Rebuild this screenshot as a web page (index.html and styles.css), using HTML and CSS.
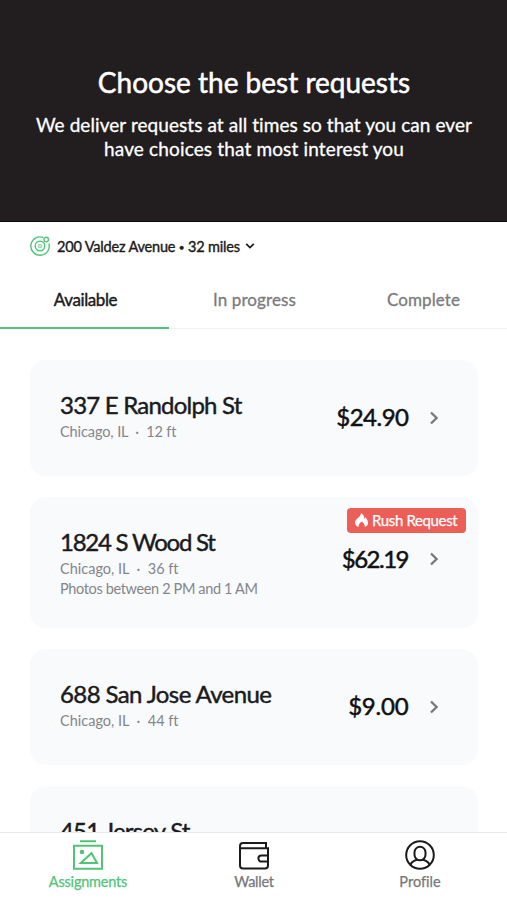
FILE: index.html
```html
<!DOCTYPE html>
<html lang="en">
<head>
<meta charset="utf-8">
<meta name="viewport" content="width=device-width, initial-scale=1">
<title>Assignments</title>
<link rel="stylesheet" href="styles.css">
</head>
<body>
<div class="app">
  <header class="hero">
    <h1><span>Choose the best requests</span></h1>
    <p><span class="t-l1">We deliver requests at all times so that you can ever</span><br><span class="t-l2">have choices that most interest you</span></p>
  </header>
  <div class="location">
    <svg class="radar" viewBox="0 0 20 20" width="20" height="20"><path d="M13.4 1.500A9.200 9.200 0 1 0 18.900 7.500"/><circle cx="10" cy="10" r="4.800"/><circle class="pulse" cx="10" cy="10" r="1.500"/><circle cx="16.200" cy="3.600" r="2.300"/></svg>
    <span class="t-loc">200 Valdez Avenue <i>•</i> 32 miles</span>
    <svg class="caret" viewBox="0 0 10 8" width="10" height="8"><path d="M1.200 1.800 5 5.600 8.800 1.800"/></svg>
  </div>
  <nav class="tabs">
    <a class="tab active"><span class="t-tab1">Available</span></a>
    <a class="tab"><span class="t-tab2">In progress</span></a>
    <a class="tab"><span class="t-tab2">Complete</span></a>
  </nav>
  <main class="list">
    <article class="card">
      <div class="info"><h2><span class="t-a1">337 E Randolph St</span></h2><p><span class="t-s1">Chicago, IL &nbsp;·&nbsp; 12 ft</span></p></div>
      <span class="price t-p1">$24.90</span>
      <svg class="chevron" viewBox="0 0 10 14" width="10" height="14"><path d="M2 1.500 7.600 7 2 12.500"/></svg>
    </article>
    <article class="card rush">
      <div class="badge"><svg viewBox="0 0 13 14" width="13" height="14"><path d="M6 0C9 2 9.500 4 9.200 6L10.500 4.200C12.200 6.200 13 8 13 9.800c0 2.200-1.200 3.600-3.200 4.200C9.900 11.500 8.500 10 6.600 8.600 5 10 3.400 11.500 3.500 14 1.200 13.200 0 11.700 0 9.600 0 5.900 5.800 4.500 6 0Z"/></svg><span class="t-rush">Rush Request</span></div>
      <div class="info"><h2><span class="t-a2">1824 S Wood St</span></h2><p><span>Chicago, IL &nbsp;·&nbsp; 36 ft</span><br><span class="t-s2b">Photos between 2 PM and 1 AM</span></p></div>
      <span class="price t-p2">$62.19</span>
      <svg class="chevron" viewBox="0 0 10 14" width="10" height="14"><path d="M2 1.500 7.600 7 2 12.500"/></svg>
    </article>
    <article class="card">
      <div class="info"><h2><span class="t-a3">688 San Jose Avenue</span></h2><p><span>Chicago, IL &nbsp;·&nbsp; 44 ft</span></p></div>
      <span class="price t-p3">$9.00</span>
      <svg class="chevron" viewBox="0 0 10 14" width="10" height="14"><path d="M2 1.500 7.600 7 2 12.500"/></svg>
    </article>
    <article class="card">
      <div class="info partial"><h2><span class="t-a4">451 Jersey St</span></h2></div>
    </article>
  </main>
  <nav class="bottom">
    <a class="item on"><svg viewBox="0 0 30 30" width="30" height="30"><path d="M7 1.200H23M1 5.700H29V28.800H1ZM7.800 23 18.500 13.200 24 23Z"/><circle class="dot" cx="9" cy="12" r="2.300"/></svg><span class="t-n1">Assignments</span></a>
    <a class="item"><svg viewBox="0 0 30 30" width="30" height="30"><path d="M27 8V3H4Q1 3 1 6V25.500Q1 28.500 4 28.500H26Q29 28.500 29 25.500V8.200H1M29 15.400H22.500a3.100 3.100 0 0 0 0 6.200H29"/></svg><span class="t-n2">Wallet</span></a>
    <a class="item"><svg viewBox="0 0 30 30" width="30" height="30"><circle cx="15" cy="15" r="13.800"/><rect x="9.500" y="6.800" width="11" height="13.500" rx="5.500"/><path d="M5.500 25C6.500 21.500 9 20.500 12 19.800M24.500 25C23.500 21.500 21 20.500 18 19.800"/></svg><span>Profile</span></a>
  </nav>
</div>
</body>
</html>
```
FILE: styles.css
```css
* { box-sizing: border-box; }
body { margin: 0; font-family: Lato, "Noto Sans", sans-serif; font-variant-ligatures: none; color: #1b1b1d; background: #fff; }
h1, h2, p { margin: 0; font-weight: 400; }
svg { fill: none; stroke: currentColor; flex: none; }
.app { height: 900px; display: flex; flex-direction: column; overflow: hidden; }
.app span { white-space: nowrap; }
.hero { height: 222px; flex: none; background: #221e1f; color: #fff; text-align: center; padding-top: 64px; border-bottom: 1px solid #0e0b0c; }
.hero h1 { font-size: 28px; line-height: 36px; padding-left: 1px; -webkit-text-stroke: .5px; }
.hero p { margin-top: 13px; font-size: 19px; line-height: 24px; padding-left: 1px; -webkit-text-stroke: .3px; }
.t-l1 { letter-spacing: .07px; }
.t-l2 { letter-spacing: .15px; }
.location { height: 49px; flex: none; display: flex; align-items: center; padding: 0 0 1px 30px; font-size: 14.5px; -webkit-text-stroke: .4px; }
.t-loc { letter-spacing: -.18px; }
.t-loc i { font-style: normal; font-size: 10px; vertical-align: 1px; }
.radar { color: #52c477; margin-right: 7px; stroke-width: 1.4; }
.pulse { opacity: .6; }
.caret { margin-left: 5px; stroke-width: 1.7; }
.tabs { height: 58px; flex: none; display: grid; grid-template-columns: repeat(3, 1fr); border-bottom: 1px solid #f0f0f0; margin-bottom: 1px; }
.tab { text-align: center; padding: 18px 0 0 2px; height: 58px; font-size: 17px; line-height: 22px; color: #7b7b80; -webkit-text-stroke: .3px; }
.active { color: #1b1b1d; border-bottom: 2px solid #52c477; -webkit-text-stroke: .45px; }
.t-tab1 { letter-spacing: -.4px; }
.t-tab2 { letter-spacing: .1px; }
.list { flex: 1; min-height: 0; overflow: hidden; padding: 30px 29px 0 30px; }
.card { height: 116px; border-radius: 16px; background: #f8fafc; display: flex; align-items: center; padding: 0 39px 1px 30px; margin-bottom: 21px; position: relative; }
.rush { height: 131px; }
.info { flex: 1; padding-bottom: 3px; }
.partial { padding-bottom: 26px; }
.rush .info { padding: 2px 0 0; }
.card h2 { font-size: 24px; line-height: 30px; -webkit-text-stroke: .45px; }
.t-a1 { letter-spacing: -.78px; }
.t-a2 { letter-spacing: -1.25px; }
.t-a3 { letter-spacing: -.6px; }
.t-a4 { letter-spacing: -.8px; }
.card p { font-size: 14.5px; line-height: 20px; color: #85858a; margin-top: 2px; }
.t-s1 { letter-spacing: -.1px; }
.t-s2b { letter-spacing: -.36px; }
.price { font-size: 24px; line-height: 30px; -webkit-text-stroke: .5px; color: #111; margin-bottom: 1px; }
.t-p1 { letter-spacing: -.5px; }
.t-p2 { letter-spacing: -1.5px; }
.t-p3 { letter-spacing: -.2px; }
.rush .price, .rush .chevron { margin-bottom: 6px; }
.chevron { color: #77777b; stroke-width: 2.3; margin-left: 20.5px; }
.price.t-p2 + .chevron { margin-left: 21px; }
.badge { position: absolute; right: 12px; top: 11px; width: 119px; height: 25px; border-radius: 4px; background: #ec5e58; color: #fff; display: flex; align-items: center; padding: 0 0 1px 8px; gap: 4px; font-size: 15px; -webkit-text-stroke: .25px; }
.t-rush { letter-spacing: -.35px; }
.badge svg { fill: #fff; stroke: none; }
.bottom { height: 68px; flex: none; border-top: 1px solid #e9e9eb; background: #fff; display: flex; padding: 7px 4px 0 5px; }
.item { flex: 1; display: flex; flex-direction: column; align-items: center; font-size: 14.5px; line-height: 18px; color: #77777b; gap: 3px; -webkit-text-stroke: .25px; }
.t-n1 { letter-spacing: -.2px; }
.t-n2 { letter-spacing: -.25px; }
.item svg { color: #1b1b1d; stroke-width: 2; }
.item.on, .on svg { color: #52c477; }
.dot { fill: currentColor; stroke: none; }
```
